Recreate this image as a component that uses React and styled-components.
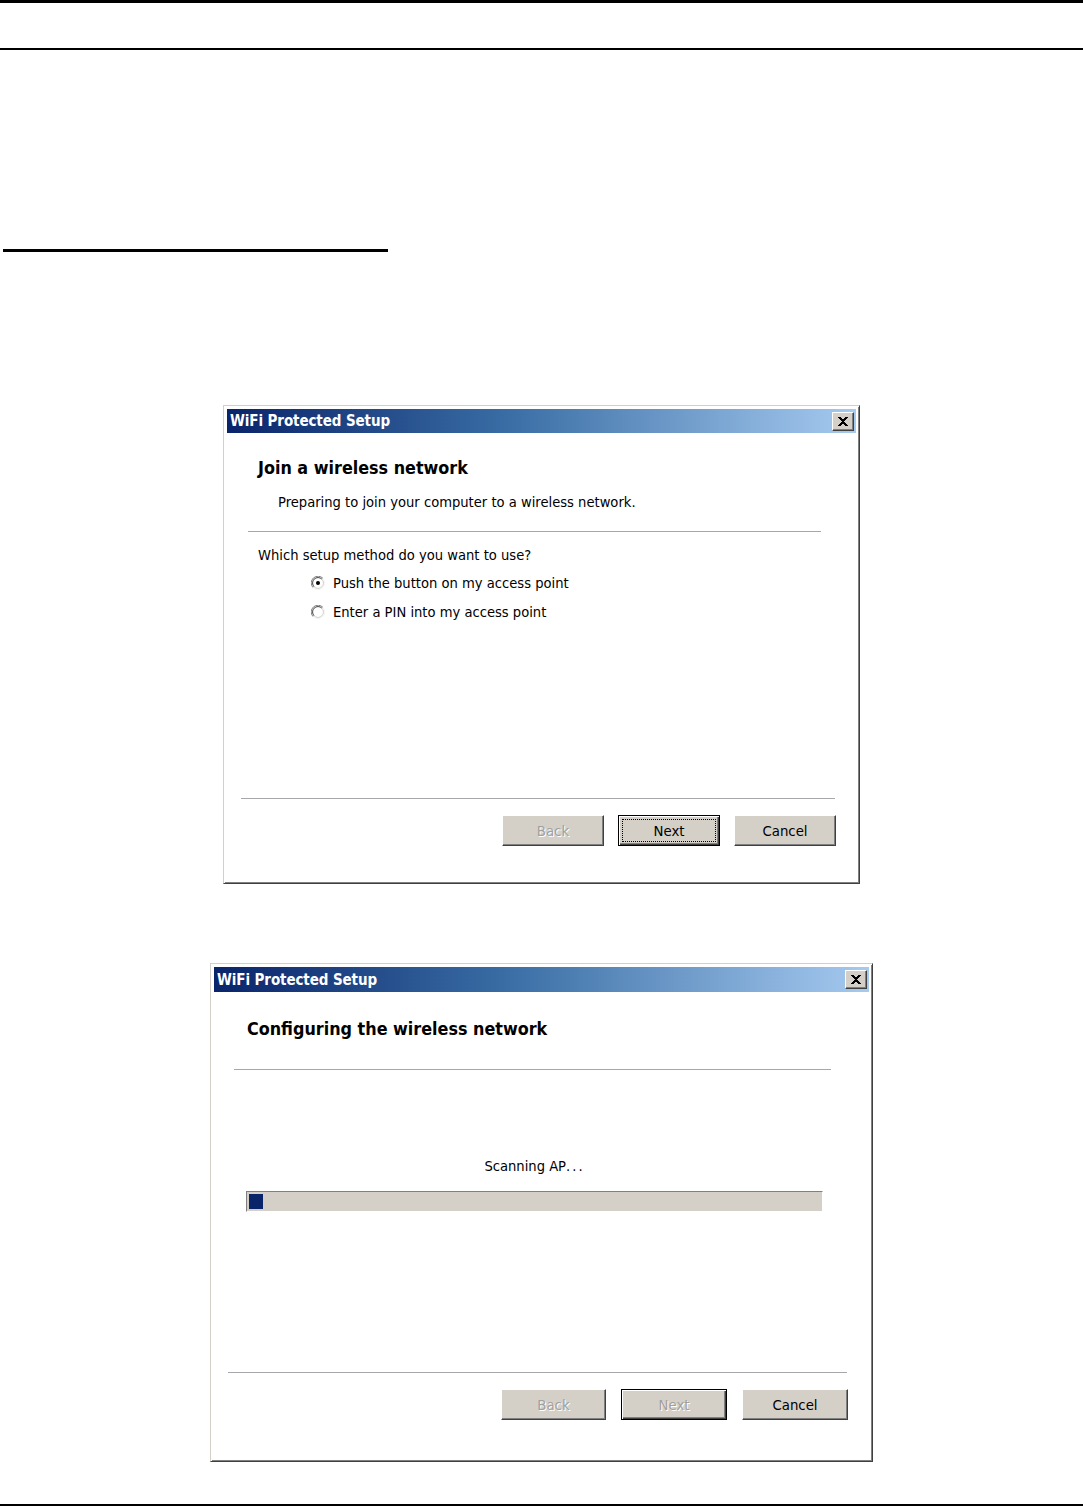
import React from 'react';
import styled, { createGlobalStyle } from 'styled-components';

const GlobalStyle = createGlobalStyle`
  body {
    margin: 0;
    background: #ffffff;
    font-family: Tahoma, "DejaVu Sans Condensed", "DejaVu Sans", sans-serif;
    color: #000;
  }
`;

const Page = styled.div`
  width: 1083px;
  height: 1506px;
  display: flex;
  flex-direction: column;
  background: #fff;
`;

const PageRule = styled.div`
  height: ${p => p.$h}px;
  width: ${p => (p.$w ? `${p.$w}px` : '100%')};
  margin-top: ${p => p.$top || 0}px;
  margin-left: ${p => p.$left || 0}px;
  background: #000;
  flex-shrink: 0;
`;

const Window = styled.div`
  box-sizing: border-box;
  width: ${p => p.$w}px;
  height: ${p => p.$h}px;
  margin-top: ${p => p.$top}px;
  margin-left: ${p => p.$left}px;
  border: 1px solid;
  border-color: #d4d0c8 #404040 #404040 #d4d0c8;
  box-shadow: inset 1px 1px #ffffff, inset -1px -1px #808080;
  padding: 3px;
  background: #fff;
  display: flex;
  flex-direction: column;
  flex-shrink: 0;
`;

const TitleBar = styled.div`
  height: ${p => p.$h}px;
  display: flex;
  align-items: center;
  justify-content: space-between;
  padding: 0 2px 0 3px;
  background: linear-gradient(to right, #0a246a 0%, #3a6ea5 45%, #a6caf0 100%);
  flex-shrink: 0;
`;

const TitleText = styled.span`
  color: #fff;
  font-weight: bold;
  font-size: 15px;
  letter-spacing: -0.1px;
`;

const CloseButton = styled.div`
  box-sizing: border-box;
  width: 22px;
  height: 19px;
  background: #d4d0c8;
  border: 1px solid;
  border-color: #fff #404040 #404040 #fff;
  box-shadow: inset -1px -1px #808080;
  display: flex;
  align-items: center;
  justify-content: center;
`;

const Heading = styled.div`
  font-size: 17.8px;
  font-weight: bold;
  line-height: 20px;
  margin-top: ${p => p.$top}px;
  margin-left: ${p => p.$left}px;
`;

const Text = styled.div`
  font-size: 14.6px;
  line-height: 16px;
  margin-top: ${p => p.$top}px;
  margin-left: ${p => p.$left || 0}px;
  margin-right: ${p => p.$right || 0}px;
  text-align: ${p => (p.$center ? 'center' : 'left')};
`;

const Dots = styled.span`
  letter-spacing: 2px;
`;

const Etched = styled.div`
  height: 1px;
  background: #a7a6aa;
  border-bottom: 1px solid #fff;
  margin-top: ${p => p.$top || 0}px;
  margin-left: ${p => p.$left}px;
  margin-right: ${p => p.$right}px;
  flex-shrink: 0;
`;

const Options = styled.div`
  display: flex;
  flex-direction: column;
  gap: 13px;
  margin-top: 12px;
  margin-left: 84px;
`;

const OptionRow = styled.label`
  display: flex;
  align-items: center;
  gap: 8px;
  font-size: 14.6px;
  line-height: 16px;
`;

const Footer = styled.div`
  margin-top: auto;
  padding-bottom: ${p => p.$bottom}px;
  display: flex;
  flex-direction: column;
`;

const ButtonRow = styled.div`
  display: flex;
  justify-content: flex-end;
  gap: ${p => p.$gap}px;
  margin-top: 15px;
  margin-right: ${p => p.$right}px;
`;

const Button = styled.div`
  box-sizing: border-box;
  width: ${p => p.$w}px;
  height: 31px;
  background: #d4d0c8;
  border: 1px solid;
  border-color: ${p => (p.$default ? '#000' : '#fff #404040 #404040 #fff')};
  box-shadow: ${p =>
    p.$default
      ? 'inset 1px 1px #fff, inset -1px -1px #404040, inset -2px -2px #808080'
      : 'inset -1px -1px #808080'};
  display: flex;
  align-items: center;
  justify-content: center;
  padding: 3px;
  font-size: 14.8px;
  color: ${p => (p.$disabled ? '#a0a0a0' : '#000')};
  text-shadow: ${p => (p.$disabled ? '1px 1px #fff' : 'none')};
`;

const FocusRing = styled.div`
  flex: 1;
  align-self: stretch;
  border: 1px dotted #000;
  display: flex;
  align-items: center;
  justify-content: center;
`;

const Progress = styled.div`
  box-sizing: border-box;
  height: 21px;
  margin-top: 17px;
  margin-left: 32px;
  margin-right: 46px;
  background: #d4d0c8;
  border: 1px solid;
  border-color: #808080 #fff #fff #808080;
  padding: 2px;
  display: flex;
`;

const Chunk = styled.div`
  height: 100%;
  background: #0a246a;
`;

const CloseIcon = () => (
  <svg width="10" height="9" viewBox="0 0 10 9" shapeRendering="crispEdges">
    <path d="M0 0h2.5l2.5 3 2.5-3H10L6.3 4.5 10 9H7.5L5 6 2.5 9H0l3.7-4.5z" fill="#000" />
  </svg>
);

const Radio = ({ checked }) => (
  <svg width="14" height="14" viewBox="0 0 14 14">
    <circle cx="7" cy="7" r="6.5" fill="#fff" />
    <path d="M12 2.4A6.5 6.5 0 0 0 2 11.6" fill="none" stroke="#808080" strokeWidth="1" />
    <path d="M2 11.6A6.5 6.5 0 0 0 12 2.4" fill="none" stroke="#f4f4f4" strokeWidth="1" />
    <path d="M10.9 3.2A5.3 5.3 0 0 0 3.1 10.8" fill="none" stroke="#404040" strokeWidth="1" />
    <path d="M3.1 10.8A5.3 5.3 0 0 0 10.9 3.2" fill="none" stroke="#d4d0c8" strokeWidth="1" />
    {checked && <circle cx="7" cy="7" r="2" fill="#000" />}
  </svg>
);

const WindowTitle = ({ h }) => (
  <TitleBar $h={h}>
    <TitleText>WiFi Protected Setup</TitleText>
    <CloseButton>
      <CloseIcon />
    </CloseButton>
  </TitleBar>
);

export default function App() {
  return (
    <Page>
      <GlobalStyle />
      <PageRule $h={3} />
      <PageRule $h={2} $top={45} />
      <PageRule $h={3} $w={385} $top={199} $left={3} />

      <Window $w={637} $h={479} $top={153} $left={223}>
        <WindowTitle h={24} />
        <Heading $top={25} $left={31}>Join a wireless network</Heading>
        <Text $top={16} $left={51}>Preparing to join your computer to a wireless network.</Text>
        <Etched $top={21} $left={21} $right={35} />
        <Text $top={14} $left={31}>Which setup method do you want to use?</Text>
        <Options>
          <OptionRow>
            <Radio checked />
            Push the button on my access point
          </OptionRow>
          <OptionRow>
            <Radio />
            Enter a PIN into my access point
          </OptionRow>
        </Options>
        <Footer $bottom={34}>
          <Etched $left={14} $right={21} />
          <ButtonRow $gap={14} $right={20}>
            <Button $w={102} $disabled>Back</Button>
            <Button $w={102} $default>
              <FocusRing>Next</FocusRing>
            </Button>
            <Button $w={102}>Cancel</Button>
          </ButtonRow>
        </Footer>
      </Window>

      <Window $w={663} $h={499} $top={79} $left={210}>
        <WindowTitle h={25} />
        <Heading $top={27} $left={33}>Configuring the wireless network</Heading>
        <Etched $top={30} $left={20} $right={38} />
        <Text $top={87} $left={32} $right={46} $center>
          Scanning AP<Dots>...</Dots>
        </Text>
        <Progress>
          <Chunk style={{ width: 14 }} />
        </Progress>
        <Footer $bottom={38}>
          <Etched $left={14} $right={22} />
          <ButtonRow $gap={15} $right={21}>
            <Button $w={105} $disabled>Back</Button>
            <Button $w={106} $default $disabled>Next</Button>
            <Button $w={106}>Cancel</Button>
          </ButtonRow>
        </Footer>
      </Window>

      <PageRule $h={2} $top={42} />
    </Page>
  );
}
